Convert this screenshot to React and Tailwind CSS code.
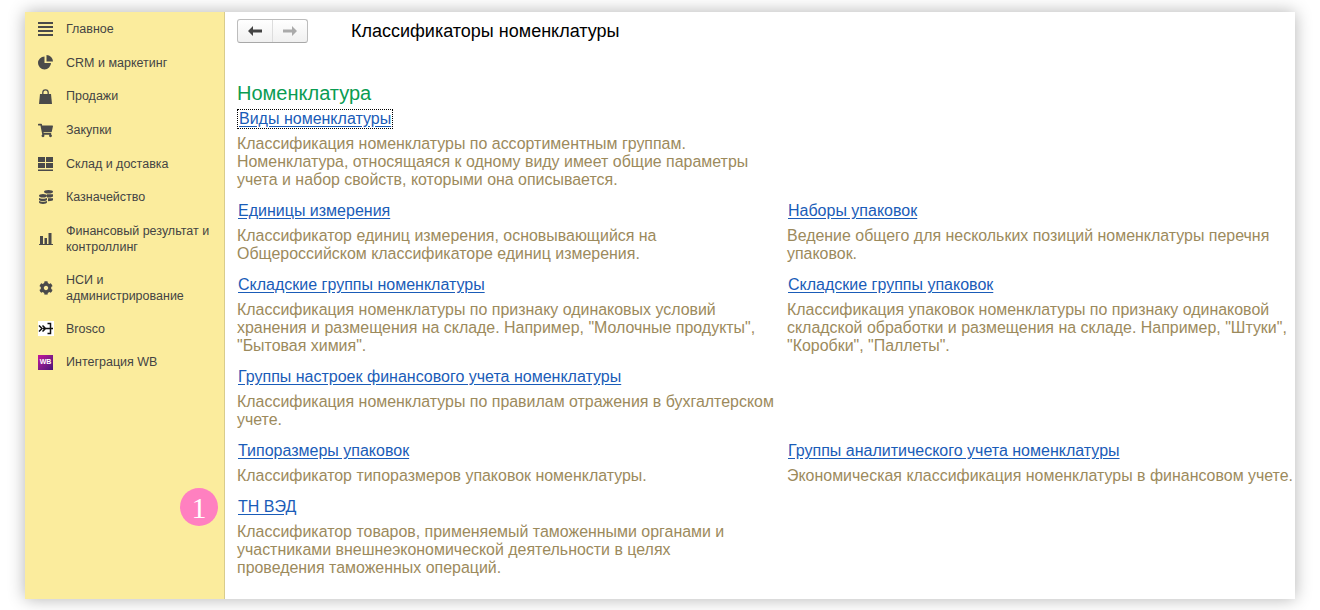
import { FaCog, FaShoppingCart } from "react-icons/fa";

function BarsIcon() {
  return (
    <svg width="15" height="14" viewBox="0 0 15 14" fill="#4a4a4a">
      <rect y="0" width="15" height="2" />
      <rect y="4" width="15" height="2" />
      <rect y="8" width="15" height="2" />
      <rect y="12" width="15" height="2" />
    </svg>
  );
}

function PieIcon() {
  return (
    <svg width="15" height="15" viewBox="0 0 15 15" fill="#4a4a4a">
      <path d="M6.500 1.500a6.500 6.500 0 1 0 6.500 6.500H6.500z" />
      <path d="M8.500 0a6.500 6.500 0 0 1 6.500 6.500H8.500z" />
    </svg>
  );
}

function BagIcon() {
  return (
    <svg width="13" height="15" viewBox="0 0 13 15" fill="#4a4a4a">
      <path d="M1 5h11l1 10H0z" />
      <path d="M3.800 7V3.500a2.700 2.700 0 0 1 5.400 0V7" fill="none" stroke="#4a4a4a" strokeWidth="1.300" />
    </svg>
  );
}

function GridIcon() {
  return (
    <svg width="15" height="14" viewBox="0 0 15 14" fill="#4a4a4a">
      <rect x="0" y="0" width="7" height="5" />
      <rect x="8" y="0" width="7" height="5" />
      <rect x="0" y="6" width="7" height="5" />
      <rect x="8" y="6" width="7" height="5" />
      <rect x="0" y="12.500" width="15" height="1.500" />
    </svg>
  );
}

function CoinsIcon() {
  return (
    <svg width="14" height="14" viewBox="0 0 14 14" fill="#4a4a4a">
      <ellipse cx="9.500" cy="1.800" rx="4.500" ry="1.800" />
      <path d="M8 4.200h6v2c0 .6-1.500 1.300-4 1.300H8zM9 8.300h5v1.800c0 .6-2 1.200-5 1.200z" />
      <ellipse cx="4" cy="5.800" rx="4" ry="1.800" />
      <path d="M0 8c1.500 1 6.500 1 8 0v1.700c0 1.800-8 1.800-8 0zM0 11c1.500 1 6.500 1 8 0v1.300c0 2.200-8 2.200-8 0z" />
    </svg>
  );
}

function ChartIcon() {
  return (
    <svg width="14" height="13" viewBox="0 0 14 13" fill="#4a4a4a">
      <rect x="1" y="4" width="3" height="8" />
      <rect x="5.500" y="6" width="2.500" height="6" />
      <rect x="9.500" y="1" width="3" height="11" />
      <rect x="0" y="12" width="14" height="1" />
    </svg>
  );
}

function BroscoIcon() {
  return (
    <svg width="16" height="15" viewBox="0 0 16 15">
      <rect width="16" height="15" fill="#fff" />
      <path d="M1 4.500l3 3-3 3M4.500 4.500l3 3-3 3M5 7.500h10M9.500 2.500h3v10h-3" fill="none" stroke="#111" strokeWidth="1.500" />
    </svg>
  );
}

function WbIcon() {
  return (
    <span className="flex h-[15px] w-[15px] items-center justify-center bg-gradient-to-br from-[#c4109c] to-[#4a1078] text-[7px] font-bold text-white">
      WB
    </span>
  );
}

function NavArrow({ color, flip }) {
  return (
    <svg width="14" height="10" viewBox="0 0 14 10" fill={color} className={flip ? "rotate-180" : ""}>
      <path d="M0 5l5-5v3.500h9v3H5V10z" />
    </svg>
  );
}

const menu = [
  { icon: <BarsIcon />, label: "Главное", className: "h-[33.6px]" },
  { icon: <PieIcon />, label: "CRM и маркетинг", className: "h-[33.6px]" },
  { icon: <BagIcon />, label: "Продажи", className: "h-[33.6px]" },
  { icon: <FaShoppingCart size={15} color="#4a4a4a" />, label: "Закупки", className: "h-[33.6px]" },
  { icon: <GridIcon />, label: "Склад и доставка", className: "h-[33.6px]" },
  { icon: <CoinsIcon />, label: "Казначейство", className: "h-[33.6px]" },
  { icon: <ChartIcon />, label: "Финансовый результат и контроллинг", className: "h-[49px]" },
  { icon: <FaCog size={14} color="#4a4a4a" />, label: "НСИ и администрирование", className: "h-[49px]" },
  { icon: <BroscoIcon />, label: "Brosco", className: "h-[33.6px]" },
  { icon: <WbIcon />, label: "Интеграция WB", className: "h-[33.6px]" }
];

function Entry({ title, lines, className = "" }) {
  return (
    <div className={className}>
      <a className="ml-px block h-[19px] pt-px text-[16px] leading-[18px] text-[#1a5cb8] underline underline-offset-2">{title}</a>
      <p className="mt-[7px] whitespace-nowrap text-[15.94px] leading-[18px] text-[#9c8a5c]">
        {lines.map((line) => (
          <span className="block" key={line}>{line}</span>
        ))}
      </p>
    </div>
  );
}

export default function App() {
  return (
    <div className="h-[610px] w-[1320px] bg-white px-[25px] pt-[12px] font-['Liberation_Sans',Arial,sans-serif]">
      <div className="flex h-[587px] w-[1270px] bg-white shadow-[0_0_16px_rgba(0,0,0,0.3)]">
        <aside className="w-[200px] shrink-0 border-r border-[#d9cc8c] bg-[#fbec9d] pt-[0.5px]">
          {menu.map((item) => (
            <div className={`flex items-center ${item.className}`} key={item.label}>
              <span className="flex w-[41px] shrink-0 justify-center">{item.icon}</span>
              <span className="w-[150px] text-[12.5px] leading-[16px] text-[#444444]">{item.label}</span>
            </div>
          ))}
        </aside>

        <main className="min-w-0 flex-1 pl-[12px]">
          <div className="flex h-[38px] items-center">
            <div className="flex h-[24px] w-[71px] rounded-[3px] border border-[#bdbdbd] border-b-[#a8a8a8] bg-gradient-to-b from-white to-[#f0f0f0]">
              <span className="flex w-[35px] items-center justify-center border-r border-[#dddddd]">
                <NavArrow color="#444444" />
              </span>
              <span className="flex flex-1 items-center justify-center">
                <NavArrow color="#aaaaaa" flip />
              </span>
            </div>
            <h1 className="ml-[43px] text-[18px] text-black">Классификаторы номенклатуры</h1>
          </div>

          <h2 className="mt-[32px] text-[20px] leading-[22px] text-[#0a9c52]">Номенклатура</h2>
          <a className="mt-[5px] block h-[20px] w-fit border border-dotted border-black px-px text-[16px] leading-[18px] text-[#1a5cb8] underline underline-offset-2">
            Виды номенклатуры
          </a>
          <p className="mt-[6px] whitespace-nowrap text-[15.94px] leading-[18px] text-[#9c8a5c]">
            <span className="block">Классификация номенклатуры по ассортиментным группам.</span>
            <span className="block">Номенклатура, относящаяся к одному виду имеет общие параметры</span>
            <span className="block">учета и набор свойств, которыми она описывается.</span>
          </p>

          <div className="mt-[12px] grid grid-cols-[550px_1fr]">
            <Entry
              title="Единицы измерения"
              lines={["Классификатор единиц измерения, основывающийся на", "Общероссийском классификаторе единиц измерения."]}
              className="h-[74px]"
            />
            <Entry
              title="Наборы упаковок"
              lines={["Ведение общего для нескольких позиций номенклатуры перечня", "упаковок."]}
            />
            <Entry
              title="Складские группы номенклатуры"
              lines={[
                "Классификация номенклатуры по признаку одинаковых условий",
                'хранения и размещения на складе. Например, "Молочные продукты",',
                '"Бытовая химия".'
              ]}
              className="h-[92px]"
            />
            <Entry
              title="Складские группы упаковок"
              lines={[
                "Классификация упаковок номенклатуры по признаку одинаковой",
                'складской обработки и размещения на складе. Например, "Штуки",',
                '"Коробки", "Паллеты".'
              ]}
            />
            <Entry
              title="Группы настроек финансового учета номенклатуры"
              lines={["Классификация номенклатуры по правилам отражения в бухгалтерском", "учете."]}
              className="h-[74px]"
            />
            <div />
            <Entry
              title="Типоразмеры упаковок"
              lines={["Классификатор типоразмеров упаковок номенклатуры."]}
              className="h-[56px]"
            />
            <Entry
              title="Группы аналитического учета номенклатуры"
              lines={["Экономическая классификация номенклатуры в финансовом учете."]}
            />
            <div className="relative">
              <span className="absolute left-[-57px] top-[-9px] flex h-[38px] w-[38px] items-center justify-center rounded-full bg-[#ff80c0] font-['Liberation_Serif',serif] text-[30px] text-white">
                1
              </span>
              <Entry
                title="ТН ВЭД"
                lines={[
                  "Классификатор товаров, применяемый таможенными органами и",
                  "участниками внешнеэкономической деятельности в целях",
                  "проведения таможенных операций."
                ]}
              />
            </div>
          </div>
        </main>
      </div>
    </div>
  );
}
